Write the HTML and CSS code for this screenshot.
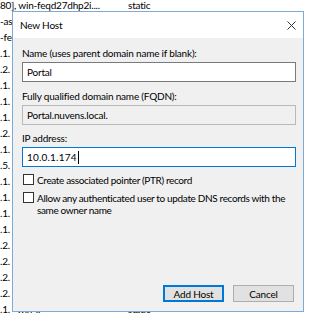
FILE: index.html
```html
<!doctype html>
<html lang="en">
  <head>
    <meta charset="UTF-8" />
    <meta name="viewport" content="width=device-width, initial-scale=1.0" />
    <title>New Host</title>
    <link rel="stylesheet" href="styles.css">
  </head>
  <body>
    <div class="screen">
      <!-- DNS zone records behind the dialog (only the uncovered edge is shown) -->
      <div class="records">
        <div class="rec"><span class="c-host">80], win-feqd27dhp2i....</span><span class="c-type">static</span></div>
        <div class="rec"><span class="c-ip">-as</span></div>
        <div class="rec"><span class="c-ip">-fe</span></div>
        <div class="rec"><span class="c-ip">.1.</span></div>
        <div class="rec"><span class="c-ip">.2.</span></div>
        <div class="rec"><span class="c-ip">.1.</span></div>
        <div class="rec"><span class="c-ip">.1.</span></div>
        <div class="rec"><span class="c-ip">.1.</span></div>
        <div class="rec"><span class="c-ip">.2.</span></div>
        <div class="rec"><span class="c-ip">.1.</span></div>
        <div class="rec"><span class="c-ip">.5.</span></div>
        <div class="rec"><span class="c-ip">.1.</span></div>
        <div class="rec"><span class="c-ip">.1.</span></div>
        <div class="rec"><span class="c-ip">.1.</span></div>
        <div class="rec"><span class="c-ip">.1.</span></div>
        <div class="rec"><span class="c-ip">.2.</span></div>
        <div class="rec"><span class="c-ip">.2.</span></div>
        <div class="rec"><span class="c-ip">.2.</span></div>
        <div class="rec"><span class="c-ip">.2.</span></div>
        <div class="rec"><span class="c-ip">.1.</span><span class="c-name">win-..</span><span class="c-type">static</span></div>
      </div>

      <div class="dialog">
        <div class="titlebar">
          <span class="title">New Host</span>
          <svg class="close" width="9" height="9" viewBox="0 0 9 9">
            <path d="M0.5 0.5 L8.5 8.5 M8.5 0.5 L0.5 8.5" stroke="#333" stroke-width="1" fill="none" />
          </svg>
        </div>

        <div class="body">
          <div class="field-label">Name (uses parent domain name if blank):</div>
          <div class="textbox">Portal</div>

          <div class="field-label">Fully qualified domain name (FQDN):</div>
          <div class="textbox readonly">Portal.nuvens.local.</div>

          <div class="field-label">IP address:</div>
          <div class="textbox focused"><span class="ip">10.0.1.174</span><span class="caret"></span></div>

          <div class="check first">
            <span class="box"></span>
            <span class="check-text">Create associated pointer (PTR) record</span>
          </div>
          <div class="check">
            <span class="box"></span>
            <span class="check-text">Allow any authenticated user to update DNS records with the<br>same owner name</span>
          </div>

          <div class="buttons">
            <button class="btn default">Add Host</button>
            <button class="btn">Cancel</button>
          </div>
        </div>
      </div>
    </div>
  </body>
</html>
```

FILE: styles.css
```css
* {
  margin: 0;
  padding: 0;
  box-sizing: border-box;
}

body {
  font-family: 'Segoe UI', Lato, 'Liberation Sans', sans-serif;
  font-size: 10px;
  letter-spacing: -0.2px;
  color: #000;
  background: #fff;
  overflow: hidden;
}

.screen {
  position: relative;
  width: 319px;
  height: 324px;
  overflow: hidden;
}

.records {
  margin-top: -3px;
}

.rec {
  display: flex;
  height: 16px;
  line-height: 16px;
  white-space: nowrap;
}

.c-host {
  width: 128px;
}

.c-ip {
  width: 17px;
}

.c-name {
  width: 111px;
}

.dialog {
  position: absolute;
  left: 12px;
  top: 11px;
  width: 292px;
  height: 301px;
  border: 1px solid #7eaad8;
  background: #f0f0f0;
  display: flex;
  flex-direction: column;
}

.titlebar {
  height: 26px;
  background: #fff;
  display: flex;
  align-items: center;
  justify-content: space-between;
  padding: 0 7px;
}

.close {
  display: block;
}

.body {
  flex: 1;
  display: flex;
  flex-direction: column;
  padding: 9px 7px 9px 9px;
}

.field-label {
  line-height: 13px;
  margin-top: 7.5px;
}

.field-label:first-child {
  margin-top: 0;
}

.textbox {
  height: 20px;
  margin-top: 2px;
  border: 1px solid #7a7a7a;
  background: #fff;
  padding: 0 4px;
  display: flex;
  align-items: center;
}

.textbox.readonly {
  background: #f0f0f0;
  border-color: #b9b9b9;
}

.textbox.focused {
  border-color: #0078d7;
}

.ip {
  letter-spacing: 0.2px;
}

.caret {
  width: 1px;
  height: 13px;
  background: #000;
  margin-left: 1px;
}

.check {
  display: flex;
  align-items: flex-start;
  line-height: 12px;
  margin-top: 6px;
  white-space: nowrap;
}

.check.first {
  margin-top: 7px;
}

.check-text {
  letter-spacing: -0.35px;
}

.box {
  width: 11px;
  height: 11px;
  border: 1px solid #333;
  background: #fff;
  flex-shrink: 0;
  margin: 0 3px 0 1px;
}

.buttons {
  margin-top: auto;
  display: flex;
  justify-content: flex-end;
  gap: 9px;
  padding-right: 2px;
}

.btn {
  width: 61px;
  height: 17px;
  font-family: inherit;
  font-size: 10px;
  letter-spacing: -0.2px;
  background: #e1e1e1;
  border: 1px solid #adadad;
  color: #000;
}

.btn.default {
  border-color: #0078d7;
  box-shadow: inset 0 0 0 1px #0078d7;
}
```
